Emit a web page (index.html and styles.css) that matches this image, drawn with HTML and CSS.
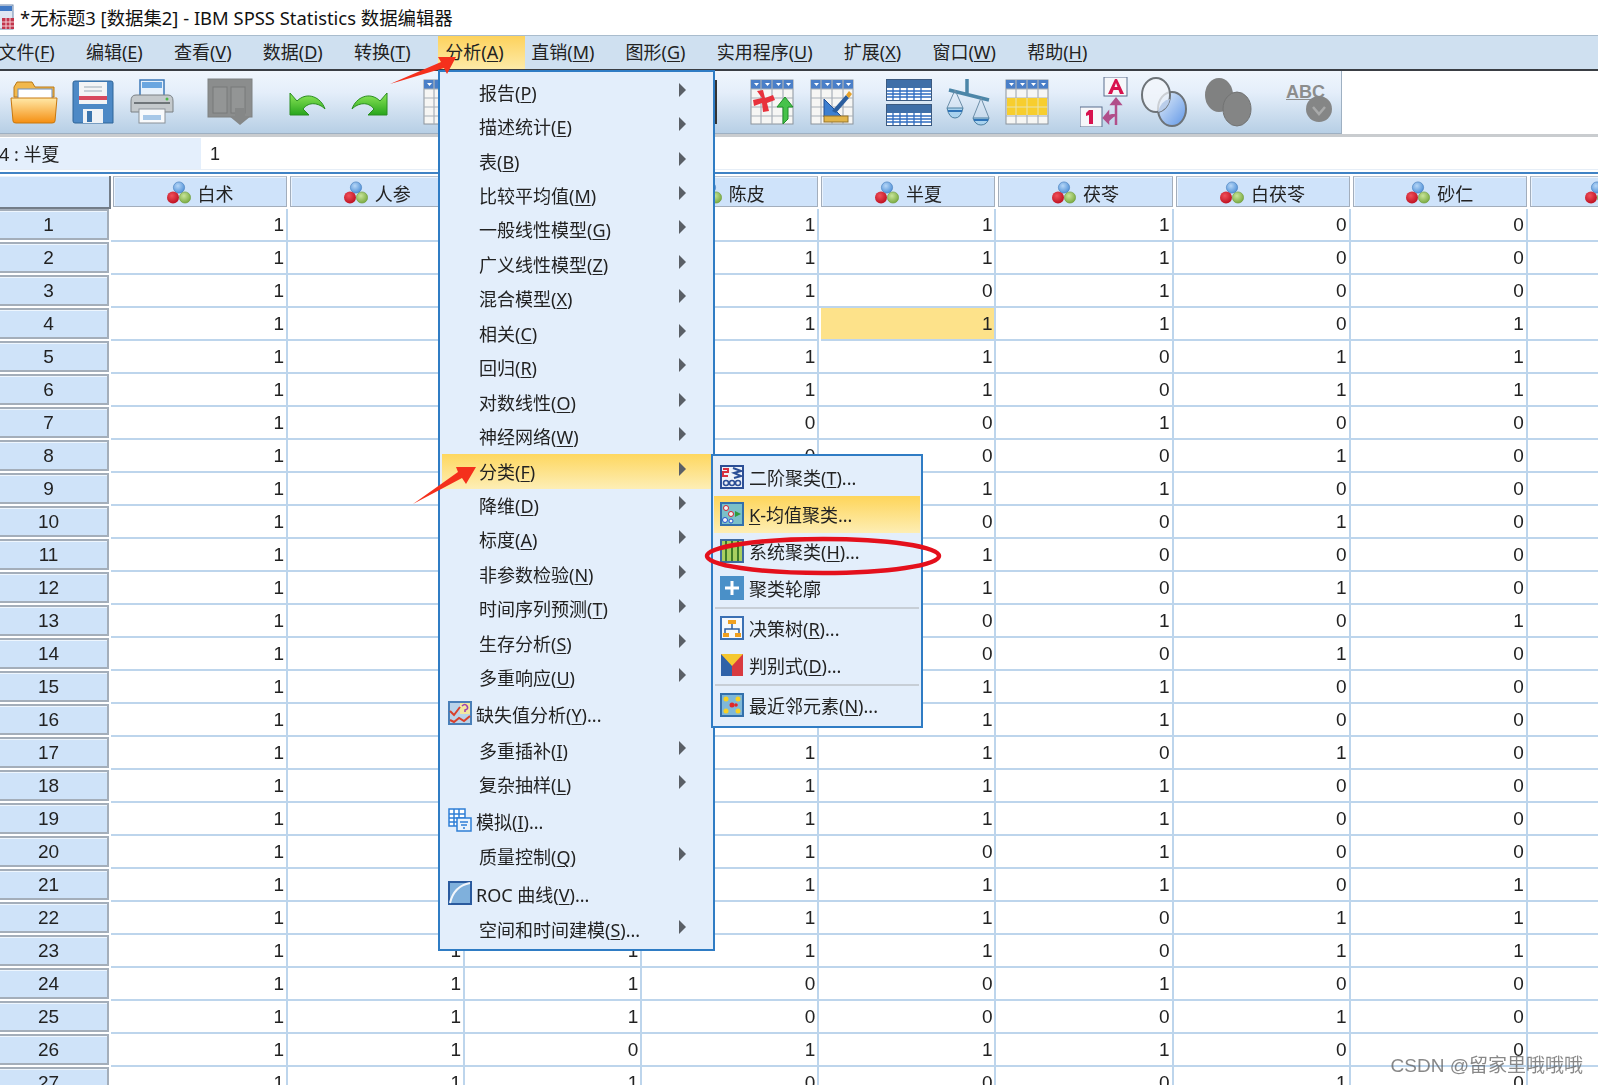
FILE: index.html
```html
<!DOCTYPE html>
<html lang="zh">
<head>
<meta charset="utf-8">
<title>SPSS</title>
<link rel="stylesheet" href="styles.css">
</head>
<body>
<svg class="defs" width="0" height="0">
  <defs>
    <radialGradient id="gb" cx=".4" cy=".35" r=".7"><stop offset="0" stop-color="#b5d6f7"/><stop offset="1" stop-color="#4e8fd6"/></radialGradient>
    <radialGradient id="gr" cx=".4" cy=".35" r=".7"><stop offset="0" stop-color="#f0505a"/><stop offset="1" stop-color="#bb0d1e"/></radialGradient>
    <radialGradient id="gg" cx=".4" cy=".35" r=".7"><stop offset="0" stop-color="#c8e49a"/><stop offset="1" stop-color="#76a83c"/></radialGradient>
    <linearGradient id="fo" x1="0" y1="0" x2="0" y2="1"><stop offset="0" stop-color="#ffe9a8"/><stop offset="1" stop-color="#f58f12"/></linearGradient>
    <linearGradient id="ga" x1="0" y1="0" x2="0" y2="1"><stop offset="0" stop-color="#8fe85a"/><stop offset="1" stop-color="#27a51c"/></linearGradient>
    <linearGradient id="bl" x1="0" y1="0" x2="1" y2="1"><stop offset="0" stop-color="#e8f1fb"/><stop offset="1" stop-color="#5f96e6"/></linearGradient>
    <symbol id="var" viewBox="0 0 24 24">
      <circle cx="12" cy="6.5" r="5.6" fill="url(#gb)" stroke="#3f78b8" stroke-width=".6"/>
      <circle cx="6" cy="16.5" r="6" fill="url(#gr)"/>
      <circle cx="18" cy="16.5" r="5.6" fill="url(#gg)" stroke="#6c9a38" stroke-width=".6"/>
    </symbol>
    <symbol id="grid" viewBox="0 0 44 46">
      <rect x="1" y="1" width="42" height="44" fill="#f6f6f4" stroke="#8c949c"/>
      <rect x="1" y="1" width="42" height="9" fill="#4a7fc8"/>
      <path d="M11 1V45M22 1V45M33 1V45M1 10H43M1 19H43M1 28H43M1 37H43" stroke="#a8b0b8" stroke-width="1.2" fill="none"/>
      <path d="M4 4h5l-2.500 3zM15 4h5l-2.500 3zM26 4h5l-2.500 3zM36 4h5l-2.500 3z" fill="#fff"/>
    </symbol>
    <symbol id="bluegrid" viewBox="0 0 46 22">
      <rect x=".5" y=".5" width="45" height="21" fill="#fff" stroke="#3c5a80"/>
      <rect x="1" y="1" width="44" height="8" fill="#3f6fa8"/>
      <path d="M1 12H45M1 15H45M1 18H45M7 9V21M14 9V21M21 9V21M28 9V21M35 9V21" stroke="#2f6cc0" stroke-width="1.300"/>
    </symbol>
  </defs>
</svg>

<div class="app">
  <header class="titlebar">
    <svg class="title-icon" width="16" height="28" viewBox="0 0 16 28"><rect x="0" y="2" width="14" height="24" fill="#dfe7f2" stroke="#6d88ad"/><rect x="1" y="3" width="12" height="5" fill="#3f78c4"/><rect x="3" y="15" width="12" height="11" fill="#c2364c"/><path d="M3 19H15M3 23H15M7 15V26M11 15V26" stroke="#f3d0d6"/></svg>
    <span class="title-text">*无标题3 [数据集2] - IBM SPSS Statistics 数据编辑器</span>
  </header>

  <nav class="menubar">
    <span class="mb">文件(<u>F</u>)</span>
    <span class="mb">编辑(<u>E</u>)</span>
    <span class="mb">查看(<u>V</u>)</span>
    <span class="mb">数据(<u>D</u>)</span>
    <span class="mb">转换(<u>T</u>)</span>
    <span class="mb mb-on">分析(<u>A</u>)</span>
    <span class="mb">直销(<u>M</u>)</span>
    <span class="mb">图形(<u>G</u>)</span>
    <span class="mb">实用程序(<u>U</u>)</span>
    <span class="mb">扩展(<u>X</u>)</span>
    <span class="mb">窗口(<u>W</u>)</span>
    <span class="mb">帮助(<u>H</u>)</span>
  </nav>

  <div class="toolrow">
    <div class="toolbar">
      <svg class="m10" width="48" height="46" viewBox="0 0 48 46"><path d="M4 8l3-5h15l3 5h19v10H4z" fill="#f2b84c" stroke="#b87818"/><rect x="8" y="10" width="34" height="10" fill="#fff" stroke="#6b8ec0"/><path d="M1 19h46l-2 23q0 2-3 2H6q-3 0-3-2z" fill="url(#fo)" stroke="#c8780e"/></svg>
      <svg class="m14" width="42" height="46" viewBox="0 0 42 46"><path d="M3 2H39q2 0 2 2V44H3q-2 0-2-2V4q0-2 2-2z" fill="#4d89c6" stroke="#2f6498"/><rect x="7" y="3" width="28" height="22" fill="#f3f4f6"/><rect x="7" y="17" width="28" height="4" fill="#d8485e"/><path d="M12 8H30M12 12H30" stroke="#b9c2cc" stroke-width="1.500"/><rect x="11" y="30" width="20" height="14" fill="#eef2f6"/><rect x="15" y="32" width="5" height="11" fill="#3a74ad"/></svg>
      <svg class="m16" width="44" height="46" viewBox="0 0 44 46"><rect x="10" y="1" width="24" height="16" fill="#e7f1fb" stroke="#3d78b8" stroke-width="1.500"/><rect x="12" y="3" width="20" height="6" fill="#6aa6e0"/><path d="M6 16H38q5 0 5 6V33H1V22q0-6 5-6z" fill="#c4c9cc" stroke="#7a8084"/><path d="M4 24H40" stroke="#6f7579" stroke-width="2"/><circle cx="37" cy="20" r="1.500" fill="#4cb848"/><rect x="9" y="30" width="26" height="14" fill="#f8fafc" stroke="#8a9198"/><rect x="13" y="36" width="18" height="5" fill="#a7c8e8"/></svg>
      <svg class="m33" width="46" height="48" viewBox="0 0 46 48"><rect x="1" y="1" width="44" height="38" fill="#8b8d8d" stroke="#7f8181"/><rect x="6" y="9" width="14" height="26" fill="#939595" stroke="#787a7a"/><rect x="24" y="9" width="14" height="26" fill="#939595" stroke="#787a7a"/><path d="M28 30h10v8h6L33 47 22 38h6z" fill="#858787"/></svg>
      <svg class="m34" width="40" height="30" viewBox="0 0 40 30"><path d="M3 6V28H22L16 22C22 14 32 16 38 22 34 10 20 4 10 14L3 6z" fill="url(#ga)" stroke="#2a8e20"/></svg>
      <svg class="m23" width="40" height="30" viewBox="0 0 40 30"><path d="M37 6V28H18L24 22C18 14 8 16 2 22 6 10 20 4 30 14L37 6z" fill="url(#ga)" stroke="#2a8e20"/></svg>
      <svg class="m33" width="44" height="46"><use href="#grid"/></svg>
      <svg class="m213" width="37" height="46" viewBox="0 0 37 46"><rect x="0" y="1" width="37" height="44" fill="#333"/></svg>
      <svg class="m33" width="44" height="46" viewBox="0 0 44 46"><use href="#grid" width="44" height="46"/><path d="M7 12l5 7-9 2 1 6 8-3 1 9 6-1-2-8 8-3-2-5-8 3-2-8z" fill="#e8323c"/><path d="M33 45V28h-6l8-10 8 10h-5v12z" fill="#46c24a" stroke="#1f8e28"/></svg>
      <svg class="m16" width="44" height="46" viewBox="0 0 44 46"><use href="#grid" width="44" height="46"/><path d="M14 20V38H32z" fill="#3d7fd0" stroke="#1f4f96"/><path d="M22 32L36 16l3 3-13 15z" fill="#2b5e9e"/><path d="M36 16l3-4 3 3-3 4z" fill="#e6a22a"/><rect x="14" y="37" width="24" height="6" fill="#e2b54a" stroke="#94732a"/></svg>
      <div class="stack m32"><svg width="46" height="22"><use href="#bluegrid"/></svg><svg width="46" height="22"><use href="#bluegrid"/></svg></div>
      <svg class="m13" width="48" height="48" viewBox="0 0 48 48"><path d="M22 1V15M4 12L44 22" stroke="#4c86a8" stroke-width="3.500" fill="none"/><path d="M10 12L2 30M10 12L18 30M36 20L28 40M36 20L44 40" stroke="#6c8ea8" fill="none"/><path d="M2 30H18Q16 40 10 40 4 40 2 30z" fill="#a9d2ee" stroke="#4c7ea0"/><path d="M28 40H44Q42 47 36 47 30 47 28 40z" fill="#a9d2ee" stroke="#4c7ea0"/><path d="M3 33H17M29 42H43" stroke="#2f74b8" stroke-width="2"/></svg>
      <svg class="m12" width="44" height="46" viewBox="0 0 44 46"><use href="#grid" width="44" height="46"/><rect x="2" y="19" width="40" height="17" fill="#f7ce2e"/><path d="M11 19V36M22 19V36M33 19V36M1 28H43" stroke="#e8e3b0"/></svg>
      <svg class="m31" width="50" height="50" viewBox="0 0 50 50"><rect x="24" y="0" width="23" height="19" fill="#f6f7fa" stroke="#5a6f8e"/><path d="M28 17L35 2h2l7 15h-4l-1.500-4h-5L32 17zM34.500 10h3L36 6z" fill="#d8124e"/><rect x="0" y="30" width="22" height="20" fill="#f6f7fa" stroke="#5a6f8e"/><path d="M9 33h4v14H9V38l-3 1v-3z" fill="#d8124e"/><path d="M36 48V26M36 22l-4 5h8zM36 38q-8 0-8 3v4M28 36l-4 5 4 4z" stroke="#b14f8a" stroke-width="2.500" fill="#b14f8a"/></svg>
      <svg class="m10" width="48" height="50" viewBox="0 0 48 50"><ellipse cx="32" cy="32" rx="14" ry="17" fill="url(#bl)" stroke="#6d7378" stroke-width="2"/><ellipse cx="16" cy="18" rx="14" ry="17" fill="#f3f6fb" fill-opacity=".7" stroke="#6d7378" stroke-width="2"/><path d="M30 22A14 17 0 0 1 18 35 14 17 0 0 1 30 22z" fill="#b9cdea"/></svg>
      <svg class="m16" width="48" height="50" viewBox="0 0 48 50"><ellipse cx="15" cy="18" rx="14" ry="17" fill="#808181"/><ellipse cx="33" cy="32" rx="14" ry="17" fill="#848585" stroke="#727373"/></svg>
      <div class="abc m28">
        <span class="abc-t">ABC</span>
        <svg class="abc-c" width="26" height="26" viewBox="0 0 26 26"><circle cx="13" cy="13" r="13" fill="#858686"/><path d="M7 11l6 7 6-7" stroke="#a9aaaa" stroke-width="2.500" fill="none"/></svg>
      </div>
    </div>
  </div>

  <div class="formula">
    <div class="namebox">4 : 半夏</div>
    <div class="inputbox">1</div>
  </div>

  <div class="sheet">
    <div class="head corner"></div>
    <div class="head"><svg width="24" height="24"><use href="#var"/></svg>白术</div>
    <div class="head"><svg width="24" height="24"><use href="#var"/></svg>人参</div>
    <div class="head"><svg width="24" height="24"><use href="#var"/></svg></div>
    <div class="head"><svg width="24" height="24"><use href="#var"/></svg>陈皮</div>
    <div class="head"><svg width="24" height="24"><use href="#var"/></svg>半夏</div>
    <div class="head"><svg width="24" height="24"><use href="#var"/></svg>茯苓</div>
    <div class="head"><svg width="24" height="24"><use href="#var"/></svg>白茯苓</div>
    <div class="head"><svg width="24" height="24"><use href="#var"/></svg>砂仁</div>
    <div class="head head-last"><svg width="24" height="24"><use href="#var"/></svg></div>

    <div class="rh">1</div><i>1</i><i></i><i></i><i>1</i><i>1</i><i>1</i><i>0</i><i>0</i><i></i>
    <div class="rh">2</div><i>1</i><i></i><i></i><i>1</i><i>1</i><i>1</i><i>0</i><i>0</i><i></i>
    <div class="rh">3</div><i>1</i><i></i><i></i><i>1</i><i>0</i><i>1</i><i>0</i><i>0</i><i></i>
    <div class="rh">4</div><i>1</i><i></i><i></i><i>1</i><i class="sel">1</i><i>1</i><i>0</i><i>1</i><i></i>
    <div class="rh">5</div><i>1</i><i></i><i></i><i>1</i><i>1</i><i>0</i><i>1</i><i>1</i><i></i>
    <div class="rh">6</div><i>1</i><i></i><i></i><i>1</i><i>1</i><i>0</i><i>1</i><i>1</i><i></i>
    <div class="rh">7</div><i>1</i><i></i><i></i><i>0</i><i>0</i><i>1</i><i>0</i><i>0</i><i></i>
    <div class="rh">8</div><i>1</i><i></i><i></i><i>0</i><i>0</i><i>0</i><i>1</i><i>0</i><i></i>
    <div class="rh">9</div><i>1</i><i></i><i></i><i></i><i>1</i><i>1</i><i>0</i><i>0</i><i></i>
    <div class="rh">10</div><i>1</i><i></i><i></i><i></i><i>0</i><i>0</i><i>1</i><i>0</i><i></i>
    <div class="rh">11</div><i>1</i><i></i><i></i><i></i><i>1</i><i>0</i><i>0</i><i>0</i><i></i>
    <div class="rh">12</div><i>1</i><i></i><i></i><i></i><i>1</i><i>0</i><i>1</i><i>0</i><i></i>
    <div class="rh">13</div><i>1</i><i></i><i></i><i></i><i>0</i><i>1</i><i>0</i><i>1</i><i></i>
    <div class="rh">14</div><i>1</i><i></i><i></i><i></i><i>0</i><i>0</i><i>1</i><i>0</i><i></i>
    <div class="rh">15</div><i>1</i><i></i><i></i><i></i><i>1</i><i>1</i><i>0</i><i>0</i><i></i>
    <div class="rh">16</div><i>1</i><i></i><i></i><i></i><i>1</i><i>1</i><i>0</i><i>0</i><i></i>
    <div class="rh">17</div><i>1</i><i></i><i></i><i>1</i><i>1</i><i>0</i><i>1</i><i>0</i><i></i>
    <div class="rh">18</div><i>1</i><i></i><i></i><i>1</i><i>1</i><i>1</i><i>0</i><i>0</i><i></i>
    <div class="rh">19</div><i>1</i><i></i><i></i><i>1</i><i>1</i><i>1</i><i>0</i><i>0</i><i></i>
    <div class="rh">20</div><i>1</i><i></i><i></i><i>1</i><i>0</i><i>1</i><i>0</i><i>0</i><i></i>
    <div class="rh">21</div><i>1</i><i></i><i></i><i>1</i><i>1</i><i>1</i><i>0</i><i>1</i><i></i>
    <div class="rh">22</div><i>1</i><i></i><i></i><i>1</i><i>1</i><i>0</i><i>1</i><i>1</i><i></i>
    <div class="rh">23</div><i>1</i><i>1</i><i>1</i><i>1</i><i>1</i><i>0</i><i>1</i><i>1</i><i></i>
    <div class="rh">24</div><i>1</i><i>1</i><i>1</i><i>0</i><i>0</i><i>1</i><i>0</i><i>0</i><i></i>
    <div class="rh">25</div><i>1</i><i>1</i><i>1</i><i>0</i><i>0</i><i>0</i><i>1</i><i>0</i><i></i>
    <div class="rh">26</div><i>1</i><i>1</i><i>0</i><i>1</i><i>1</i><i>1</i><i>0</i><i>0</i><i></i>
    <div class="rh">27</div><i>1</i><i>1</i><i>1</i><i>0</i><i>0</i><i>0</i><i>1</i><i>0</i><i></i>
  </div>

  <div class="menu main-menu">
    <div class="mi"><span>报告(<u>P</u>)</span><b class="tri"></b></div>
    <div class="mi"><span>描述统计(<u>E</u>)</span><b class="tri"></b></div>
    <div class="mi"><span>表(<u>B</u>)</span><b class="tri"></b></div>
    <div class="mi"><span>比较平均值(<u>M</u>)</span><b class="tri"></b></div>
    <div class="mi"><span>一般线性模型(<u>G</u>)</span><b class="tri"></b></div>
    <div class="mi"><span>广义线性模型(<u>Z</u>)</span><b class="tri"></b></div>
    <div class="mi"><span>混合模型(<u>X</u>)</span><b class="tri"></b></div>
    <div class="mi"><span>相关(<u>C</u>)</span><b class="tri"></b></div>
    <div class="mi"><span>回归(<u>R</u>)</span><b class="tri"></b></div>
    <div class="mi"><span>对数线性(<u>O</u>)</span><b class="tri"></b></div>
    <div class="mi"><span>神经网络(<u>W</u>)</span><b class="tri"></b></div>
    <div class="mi mi-on"><span>分类(<u>F</u>)</span><b class="tri"></b></div>
    <div class="mi"><span>降维(<u>D</u>)</span><b class="tri"></b></div>
    <div class="mi"><span>标度(<u>A</u>)</span><b class="tri"></b></div>
    <div class="mi"><span>非参数检验(<u>N</u>)</span><b class="tri"></b></div>
    <div class="mi"><span>时间序列预测(<u>T</u>)</span><b class="tri"></b></div>
    <div class="mi"><span>生存分析(<u>S</u>)</span><b class="tri"></b></div>
    <div class="mi"><span>多重响应(<u>U</u>)</span><b class="tri"></b></div>
    <div class="mi mi-ic"><svg width="24" height="24" viewBox="0 0 24 24"><rect width="24" height="24" fill="#4a7fb8"/><rect x="2" y="2" width="20" height="20" fill="#b9d3ea"/><rect x="12" y="2" width="10" height="11" fill="#f3e6a0"/><path d="M2 10l4 4 6-8M2 19l4 2 5-4 5 3 6-5" stroke="#d8402c" stroke-width="2" fill="none"/><path d="M14 5q3-3 5 0t-2 4v2" stroke="#a040b0" stroke-width="1.600" fill="none"/></svg><span>缺失值分析(<u>Y</u>)...</span></div>
    <div class="mi"><span>多重插补(<u>I</u>)</span><b class="tri"></b></div>
    <div class="mi"><span>复杂抽样(<u>L</u>)</span><b class="tri"></b></div>
    <div class="mi mi-ic"><svg width="24" height="24" viewBox="0 0 24 24"><path d="M1 1H17V18H1zM1 6H17M1 10H17M1 14H17M6 1V18M11 1V18" fill="#fff" stroke="#2f7fd6" stroke-width="1.500"/><rect x="9" y="10" width="14" height="13" fill="#eaf3fc" stroke="#2f7fd6" stroke-width="1.500"/><path d="M12 14h8M13 17h6M15 20h2" stroke="#2f7fd6" stroke-width="1.500"/></svg><span>模拟(<u>I</u>)...</span></div>
    <div class="mi"><span>质量控制(<u>Q</u>)</span><b class="tri"></b></div>
    <div class="mi mi-ic"><svg width="24" height="24" viewBox="0 0 24 24"><rect width="24" height="24" fill="#2a5a9e"/><rect x="2" y="2" width="20" height="20" fill="#7fb0dc"/><path d="M2 22Q6 5 22 2" stroke="#f2f6fb" stroke-width="2" fill="none"/></svg><span>ROC 曲线(<u>V</u>)...</span></div>
    <div class="mi"><span>空间和时间建模(<u>S</u>)...</span><b class="tri"></b></div>
  </div>

  <div class="menu sub-menu">
    <div class="si"><svg width="24" height="24" viewBox="0 0 24 24"><rect width="24" height="24" fill="#2c4f96"/><rect x="2" y="2" width="20" height="20" fill="#eef3fa"/><path d="M3 4h5v3H3v4h5" stroke="#d83040" stroke-width="2" fill="none"/><path d="M13 3l8 3-7 2 7 3-7 2" stroke="#2c4f96" stroke-width="2" fill="none"/><circle cx="6" cy="18" r="2.500" fill="none" stroke="#2c4f96" stroke-width="1.500"/><circle cx="12" cy="18" r="2.500" fill="none" stroke="#2c4f96" stroke-width="1.500"/><circle cx="18" cy="18" r="2.500" fill="none" stroke="#2c4f96" stroke-width="1.500"/></svg><span>二阶聚类(<u>T</u>)...</span></div>
    <div class="si si-on"><svg width="24" height="24" viewBox="0 0 24 24"><rect width="24" height="24" fill="#3370ac"/><rect x="2" y="2" width="20" height="20" fill="#7bc0c8"/><circle cx="6" cy="6" r="2.500" fill="#f4f4f4" stroke="#d02030"/><circle cx="11" cy="12" r="2.500" fill="#f4f4f4" stroke="#d02030"/><circle cx="5" cy="18" r="2.500" fill="#f4f4f4" stroke="#2050d0"/><circle cx="11" cy="19" r="2" fill="#f4f4f4" stroke="#2050d0"/><path d="M15 9l6 3-6 3z" fill="#2f9a3e"/></svg><span><u>K</u>-均值聚类...</span></div>
    <div class="si"><svg width="24" height="24" viewBox="0 0 24 24"><rect width="24" height="24" fill="#3d6aa0"/><rect x="2" y="2" width="20" height="20" fill="#a8cf60"/><path d="M6 2V22M12 2V22M18 2V22" stroke="#3d7a28" stroke-width="2"/></svg><span>系统聚类(<u>H</u>)...</span></div>
    <div class="si"><svg width="24" height="24" viewBox="0 0 24 24"><rect width="24" height="24" fill="#4a90c8"/><path d="M12 5V19M5 12H19" stroke="#fff" stroke-width="3"/></svg><span>聚类轮廓</span></div>
    <div class="sep"></div>
    <div class="si"><svg width="24" height="24" viewBox="0 0 24 24"><rect width="24" height="24" fill="#3a70b4"/><rect x="2" y="2" width="20" height="20" fill="#f5f8fc"/><path d="M12 8V13M5 18V13H19V18" stroke="#2f5fa0" fill="none" stroke-width="1.500"/><rect x="8" y="4" width="8" height="4" fill="#f0a020"/><rect x="3" y="17" width="6" height="4" fill="#f0a020"/><rect x="15" y="17" width="6" height="4" fill="#f0a020"/></svg><span>决策树(<u>R</u>)...</span></div>
    <div class="si"><svg width="24" height="24" viewBox="0 0 24 24"><rect x="1" y="1" width="22" height="22" fill="#d83a40"/><path d="M1 1L12 12V23H1z" fill="#2f62a8"/><path d="M1 1H23L12 13z" fill="#f5c830"/></svg><span>判别式(<u>D</u>)...</span></div>
    <div class="sep"></div>
    <div class="si"><svg width="24" height="24" viewBox="0 0 24 24"><rect width="24" height="24" fill="#3370ac"/><rect x="2" y="2" width="20" height="20" fill="#7fb8d8"/><circle cx="6" cy="6" r="2.500" fill="#f8d020"/><circle cx="18" cy="6" r="2.500" fill="#f8d020"/><circle cx="6" cy="18" r="2.500" fill="#f8d020"/><circle cx="18" cy="18" r="2.500" fill="#f8d020"/><circle cx="12" cy="12" r="2.500" fill="#e02828"/><circle cx="16" cy="12" r="1.800" fill="#e02828"/></svg><span>最近邻元素(<u>N</u>)...</span></div>
  </div>

  <svg class="annot" width="1598" height="1085" viewBox="0 0 1598 1085">
    <ellipse cx="823" cy="556" rx="116" ry="17" fill="none" stroke="#e4101c" stroke-width="4.500"/>
    <path d="M390 84L441 62 438 57 456 57 447 74 444 68z" fill="#f4301c"/>
    <path d="M413 504L458 472 456 467 476 467 466 484 462 478z" fill="#f4301c"/>
  </svg>

  <div class="watermark">CSDN @留家里哦哦哦</div>
</div>
</body>
</html>
```
FILE: styles.css
```css
* { box-sizing: border-box; }
html, body { margin: 0; padding: 0; background: #fff; }
body {
  width: 1598px;
  height: 1085px;
  overflow: hidden;
  font-family: "Noto Sans", "Noto Sans CJK SC", sans-serif;
  color: #1d1d25;
}
.defs { position: absolute; }
.app { position: relative; width: 1598px; height: 1085px; overflow: hidden; filter: blur(.5px); }
u { text-underline-offset: 2px; text-decoration-thickness: 1px; }

.titlebar { height: 35px; display: flex; align-items: center; background: #fff; padding-bottom: 2px; }
.title-icon { margin-left: -1px; margin-right: 5px; }
.title-text { font-size: 18.400px; color: #111; white-space: nowrap; }

.menubar {
  height: 36px;
  display: flex;
  align-items: stretch;
  background: #cfe0f0;
  border-top: 1px solid #a9bccd;
  border-bottom: 2px solid #3a3e44;
  margin-left: -17px;
}
.mb { padding: 0 15.600px; font-size: 18px; line-height: 33px; white-space: nowrap; color: #222; }
.mb-on { background: linear-gradient(#fdd25c, #fdeaa8); margin: 0 -9px 0 12px; padding: 0 21px 0 7px; }

.toolrow { height: 66px; border-bottom: 3px solid #c9cccf; background: #fff; }
.toolbar {
  width: 1342px;
  height: 63px;
  display: flex;
  align-items: center;
  background: linear-gradient(#f0f6fd, #e4eefa 35%, #b7cfe5);
  border-right: 1px solid #9eb0c2;
  border-bottom: 1px solid #9eb0c2;
}
.toolbar > * { flex: none; }
.m10 { margin-left: 10px; }
.m12 { margin-left: 12px; }
.m13 { margin-left: 13px; }
.m14 { margin-left: 14px; }
.m16 { margin-left: 16px; }
.m23 { margin-left: 23px; }
.m28 { margin-left: 28px; }
.m31 { margin-left: 31px; }
.m32 { margin-left: 32px; }
.m33 { margin-left: 33px; }
.m34 { margin-left: 34px; }
.m213 { margin-left: 213px; }
.stack { display: flex; flex-direction: column; gap: 3px; }
.stack svg { display: block; }
.abc { position: relative; width: 50px; height: 44px; }
.abc-t {
  position: absolute;
  left: 6px;
  top: 2px;
  font: 700 18px "Liberation Sans", sans-serif;
  color: #8c8d8d;
  text-decoration: underline;
}
.abc-c { position: absolute; left: 26px; top: 16px; }

.formula { height: 33px; display: flex; gap: 4px; align-items: stretch; padding-top: 1px; border-bottom: 1px solid #e6eef7; }
.namebox { width: 202px; background: #e4effc; font-size: 18px; line-height: 33px; white-space: nowrap; color: #222; margin-left: -1px; }
.inputbox { flex: 1; font: 18px/33px "Liberation Sans", sans-serif; padding-left: 5px; color: #222; }

.sheet {
  display: grid;
  grid-template-columns: 111px repeat(9, 177.100px);
  grid-template-rows: 33px;
  grid-auto-rows: 33px;
  border-top: 2px solid #3f82c4;
  margin-top: 2px;
  padding-top: 2px;
}
.head {
  display: flex;
  align-items: center;
  justify-content: center;
  gap: 7px;
  margin: 0 1px 2px 2px;
  padding-top: 2px;
  font-size: 18px;
  background: #cfe3fa;
  border: 1px solid #a3aebc;
  border-top-color: #b8c2cf;
  box-shadow: inset 1px 1px 0 #eaf3fd;
  color: #222;
  white-space: nowrap;
}
.head-last { justify-content: flex-start; padding-left: 54px; }
.corner { margin: 0 0 0 -2px; border: 0; border-right: 2px solid #737d88; border-bottom: 2px solid #737d88; }
.rh {
  margin: 0 2px 2px -2px;
  background: #cfe3f9;
  border: 2px solid #a4aeba;
  border-left: 0;
  box-shadow: inset 0 1px 0 #eef6fe;
  font: 19px/28px "Liberation Sans", sans-serif;
  text-align: center;
  padding-right: 8px;
  color: #222;
}
.sheet i {
  font: normal 19px/32px "Liberation Sans", sans-serif;
  text-align: right;
  padding-right: 2px;
  border-right: 2px solid #bdd5ec;
  border-bottom: 2px solid #bdd5ec;
  color: #222;
}
.sheet i.sel { background: #fde28a; margin-left: 2px; }

.menu {
  position: absolute;
  background: #e3eefb;
  border: 2px solid #2f7cc4;
  display: flex;
  flex-direction: column;
  font-size: 18px;
  color: #222;
  white-space: nowrap;
}
.main-menu { left: 438px; top: 70px; width: 277px; height: 881px; padding: 3.500px 2px 0; }
.mi { position: relative; height: 34.450px; padding: 0 0 2px 37px; display: flex; align-items: center; flex: none; }
.mi-on { background: linear-gradient(#fed75f, #fdeeb6); }
.mi-ic { height: 38px; padding: 0 0 0 6px; gap: 4px; }
.mi-ic svg { flex: none; margin-bottom: 2px; }
.tri {
  position: absolute;
  left: 237px;
  top: 50%;
  margin-top: -10px;
  border-left: 7px solid #5a5f66;
  border-top: 7px solid transparent;
  border-bottom: 7px solid transparent;
}
.sub-menu { left: 711px; top: 454px; width: 212px; height: 274px; padding: 2.500px 1px 0; }
.si { height: 37px; display: flex; align-items: center; gap: 5px; padding-left: 6px; flex: none; }
.si svg { flex: none; }
.si span { margin-bottom: 1px; }
.si-on { background: linear-gradient(#fed55a, #fdeeb4); }
.sep { height: 3px; flex: none; margin: 0 1px; border-top: 2px solid #c7ced6; }

.annot { position: absolute; left: 0; top: 0; pointer-events: none; }
.watermark {
  position: absolute;
  right: 15px;
  top: 1052px;
  font-family: "Liberation Sans", "Noto Sans CJK SC", sans-serif;
  font-size: 19px;
  line-height: 28px;
  color: rgba(90, 90, 90, .72);
  white-space: nowrap;
}
```
